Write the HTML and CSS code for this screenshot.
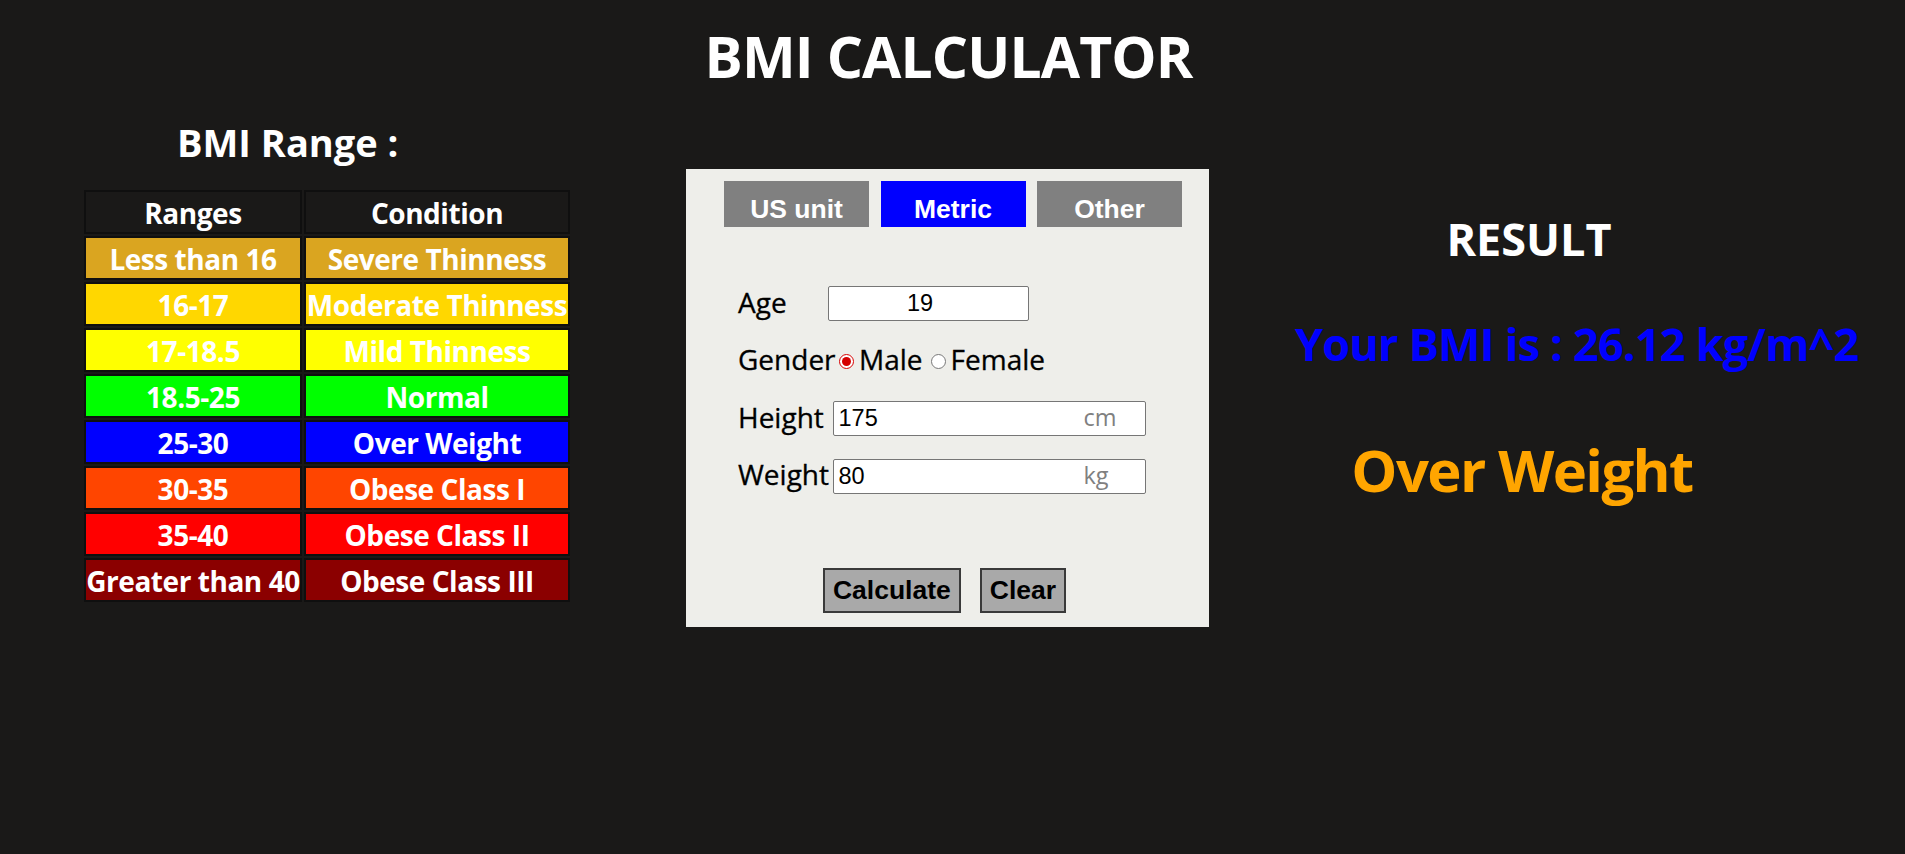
FILE: index.html
```html
<!DOCTYPE html>
<html lang="en">
<head>
<meta charset="utf-8">
<title>BMI Calculator</title>
<link rel="stylesheet" href="styles.css">
</head>
<body>
<h1 class="title">BMI CALCULATOR</h1>
<div class="main">
  <section class="ranges">
    <h2 class="ranges-title">BMI Range :</h2>
    <table class="range-table">
      <tr class="r-head"><th>Ranges</th><th>Condition</th></tr>
      <tr class="r-severe"><td>Less than 16</td><td>Severe Thinness</td></tr>
      <tr class="r-moderate"><td>16-17</td><td>Moderate Thinness</td></tr>
      <tr class="r-mild"><td>17-18.5</td><td>Mild Thinness</td></tr>
      <tr class="r-normal"><td>18.5-25</td><td>Normal</td></tr>
      <tr class="r-over"><td>25-30</td><td>Over Weight</td></tr>
      <tr class="r-ob1"><td>30-35</td><td>Obese Class I</td></tr>
      <tr class="r-ob2"><td>35-40</td><td>Obese Class II</td></tr>
      <tr class="r-ob3"><td>Greater than 40</td><td>Obese Class III</td></tr>
    </table>
  </section>

  <section class="panel">
    <div class="tabs">
      <button class="tab" type="button">US unit</button>
      <button class="tab tab-active" type="button">Metric</button>
      <button class="tab" type="button">Other</button>
    </div>
    <form class="form">
      <div class="row">
        <label class="label label-age" for="age">Age</label>
        <input class="input input-age" id="age" type="text" value="19">
      </div>
      <div class="row">
        <span class="label label-gender">Gender</span>
        <input class="radio" type="radio" name="gender" id="male" checked>
        <label class="opt" for="male">Male</label>
        <input class="radio radio-second" type="radio" name="gender" id="female">
        <label class="opt" for="female">Female</label>
      </div>
      <div class="row">
        <label class="label" for="height">Height</label>
        <div class="field">
          <input class="input input-wide" id="height" type="text" value="175">
          <span class="unit">cm</span>
        </div>
      </div>
      <div class="row">
        <label class="label" for="weight">Weight</label>
        <div class="field">
          <input class="input input-wide" id="weight" type="text" value="80">
          <span class="unit">kg</span>
        </div>
      </div>
      <div class="actions">
        <button class="btn" type="button">Calculate</button>
        <button class="btn" type="button">Clear</button>
      </div>
    </form>
  </section>

  <section class="result">
    <h2 class="result-title">RESULT</h2>
    <p class="result-bmi">Your BMI is : 26.12 kg/m^2</p>
    <p class="result-status">Over Weight</p>
  </section>
</div>
</body>
</html>
```

FILE: styles.css
```css
html, body {
  margin: 0;
  padding: 0;
}

body {
  background: #1a1918;
  color: #ffffff;
  font-family: "Open Sans", "Noto Sans", sans-serif;
  width: 1905px;
  height: 854px;
  overflow: hidden;
}

.title {
  margin: 22px 0 0 0;
  padding-right: 8px;
  font-size: 57px;
  line-height: 68px;
  font-weight: 700;
  text-align: center;
  letter-spacing: -0.9px;
}

.main {
  display: flex;
  align-items: flex-start;
  padding-left: 82px;
}

/* ---------- ranges ---------- */
.ranges {
  width: 490px;
  flex: none;
}

.ranges-title {
  margin: 29px 0 0 0;
  padding-left: 95px;
  font-size: 38px;
  line-height: 46px;
  font-weight: 700;
}

.range-table {
  margin-top: 23px;
  border-collapse: separate;
  border-spacing: 2px;
  table-layout: fixed;
  width: 490px;
}

.range-table th,
.range-table td {
  border: 2px solid #0f0f0f;
  padding: 3px 0 0 0;
  line-height: 37px;
  font-size: 28px;
  font-weight: 700;
  letter-spacing: -0.45px;
  color: #ffffff;
  text-align: center;
  white-space: nowrap;
  overflow: hidden;
}

.range-table th:first-child,
.range-table td:first-child {
  width: 214px;
}

.range-table th:last-child,
.range-table td:last-child {
  width: 262px;
}

.r-head th { background: #1a1918; }
.r-severe td { background: #daa520; }
.r-moderate td { background: #ffd700; }
.r-mild td { background: #ffff00; }
.r-normal td { background: #00ff00; }
.r-over td { background: #0000ff; }
.r-ob1 td { background: #ff4500; }
.r-ob2 td { background: #ff0000; }
.r-ob3 td { background: #8b0000; }

/* ---------- panel ---------- */
.panel {
  flex: none;
  width: 523px;
  margin-left: 114px;
  margin-top: 79px;
  background: #eeeeea;
  padding: 12px 0 14px 0;
  box-sizing: border-box;
  color: #000000;
}

.tabs {
  display: flex;
  gap: 11.5px;
  padding-left: 38px;
}

.tab {
  width: 145px;
  height: 46px;
  border: none;
  margin: 0;
  padding: 10px 0 0 0;
  background: #808080;
  color: #ffffff;
  font-family: "Liberation Sans", Arial, sans-serif;
  font-size: 26.5px;
  font-weight: 700;
}

.tab-active {
  background: #0000ff;
}

.form {
  margin: 59px 0 0 0;
  display: flex;
  flex-direction: column;
  gap: 22.5px;
}

.row {
  display: flex;
  align-items: center;
  height: 35px;
  padding-left: 52px;
}

.label,
.opt {
  font-size: 28px;
  line-height: 35px;
  padding-bottom: 3px;
  color: #000000;
  white-space: nowrap;
  -webkit-text-stroke: 0.3px #000000;
}

.label {
  width: 94.5px;
  flex: none;
}

.label-age {
  width: 90px;
}

.label-gender {
  width: 95px;
}

.input {
  box-sizing: border-box;
  height: 35px;
  margin: 0;
  border: 1px solid #767676;
  border-radius: 2px;
  background: #ffffff;
  color: #000000;
  font-family: "Liberation Sans", Arial, sans-serif;
  font-size: 23.5px;
  padding: 0 5px;
}

.input-age {
  width: 201px;
  padding-right: 22px;
  text-align: center;
}

.field {
  position: relative;
  width: 313px;
  height: 35px;
}

.input-wide {
  width: 313px;
}

.unit {
  position: absolute;
  left: 251px;
  top: 0;
  line-height: 33px;
  font-size: 23.5px;
  color: #808080;
}

.radio {
  width: 15px;
  height: 15px;
  margin: 0 5px 0 6px;
  flex: none;
  accent-color: #d40000;
}

.radio-second {
  margin-left: 8px;
}

.actions {
  display: flex;
  justify-content: center;
  gap: 19px;
  margin-top: 52px;
  padding-right: 6px;
}

.btn {
  box-sizing: border-box;
  height: 45px;
  margin: 0;
  padding: 0 8px;
  border: 2px solid #3a3a3a;
  background: #a9a9a9;
  color: #000000;
  font-family: "Liberation Sans", Arial, sans-serif;
  font-size: 26.5px;
  font-weight: 700;
}

/* ---------- result ---------- */
.result {
  flex: none;
  width: 640px;
}

.result-title {
  margin: 122px 0 0 0;
  font-size: 45px;
  line-height: 54px;
  font-weight: 700;
  text-align: center;
}

.result-bmi {
  margin: 51px 0 0 0;
  padding-left: 86px;
  font-size: 45px;
  line-height: 54px;
  font-weight: 700;
  letter-spacing: -0.8px;
  color: #0000ff;
  white-space: nowrap;
}

.result-status {
  margin: 63px 0 0 0;
  padding-right: 14px;
  font-size: 58px;
  line-height: 72px;
  font-weight: 700;
  letter-spacing: -1.6px;
  color: #ffa500;
  text-align: center;
}
```
